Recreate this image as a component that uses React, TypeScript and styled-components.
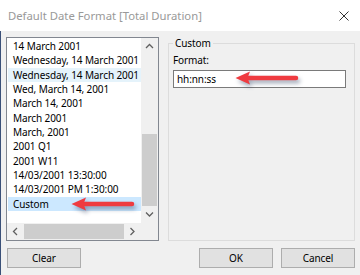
import styled, { createGlobalStyle } from "styled-components";

const GlobalStyle = createGlobalStyle`
  html, body {
    margin: 0;
    padding: 0;
    background: #f0f0f0;
  }
  body {
    font-family: "Noto Sans", "Open Sans", sans-serif;
    color: #000;
  }
`;

const Window = styled.div`
  position: relative;
  width: 360px;
  height: 275px;
  display: flex;
  flex-direction: column;
  overflow: hidden;
`;

const TitleBar = styled.div`
  height: 31px;
  flex: none;
  background: #fff;
  display: flex;
  align-items: center;
  justify-content: space-between;
  padding: 0 11px 0 8px;
`;

const Title = styled.span`
  font-size: 11.3px;
  color: #999;
`;

const Body = styled.div`
  flex: 1;
  display: flex;
  flex-direction: column;
  background: #f0f0f0;
  border-left: 1px solid #3a5078;
  padding: 6px 5px 7px 5px;
  font-size: 10px;
  letter-spacing: -0.1px;
`;

const MainRow = styled.div`
  display: flex;
  gap: 9px;
  height: 204px;
`;

const ListBox = styled.div`
  width: 153px;
  flex: none;
  box-sizing: border-box;
  border: 1px solid #828790;
  background: #fff;
  display: grid;
  grid-template-columns: 1fr 17px;
  grid-template-rows: 1fr 17px;
`;

const Items = styled.div`
  padding: 1px 0 0 1px;
  overflow: hidden;
`;

const Item = styled.div<{ $state?: "hover" | "selected" }>`
  height: 14.33px;
  line-height: 14.33px;
  padding-left: 5px;
  white-space: nowrap;
  background: ${(p) =>
    p.$state === "selected" ? "#cce8ff" : p.$state === "hover" ? "#e5f3fb" : "transparent"};
`;

const VScroll = styled.div`
  background: #f0f0f0;
  display: flex;
  flex-direction: column;
`;

const HScroll = styled.div`
  background: #f0f0f0;
  display: flex;
`;

const Corner = styled.div`
  background: #f0f0f0;
`;

const ScrollButton = styled.div`
  width: 17px;
  height: 17px;
  flex: none;
  display: flex;
  align-items: center;
  justify-content: center;
`;

const VTrack = styled.div`
  flex: 1;
  display: flex;
  flex-direction: column;
  justify-content: flex-end;
`;

const VThumb = styled.div`
  height: 72px;
  margin: 0 1px;
  background: #cdcdcd;
`;

const HTrack = styled.div`
  flex: 1;
  display: flex;
  padding: 1px 0;
`;

const HThumb = styled.div`
  flex: 1;
  background: #cdcdcd;
`;

const GroupBox = styled.fieldset`
  flex: 1;
  min-width: 0;
  margin: 0;
  border: 1px solid #dcdcdc;
  padding: 0 8px 0 4px;
`;

const Legend = styled.legend`
  padding: 0 2px;
  line-height: 13px;
`;

const Label = styled.div`
  margin-top: 4px;
  line-height: 13px;
`;

const Input = styled.div`
  margin-top: 3px;
  height: 18px;
  box-sizing: border-box;
  border: 1px solid #7a7a7a;
  background: #fff;
  padding: 0 3px;
  line-height: 16px;
`;

const Footer = styled.div`
  margin-top: 7px;
  display: flex;
  gap: 7px;
`;

const Button = styled.div<{ $push?: boolean }>`
  width: 74px;
  height: 20px;
  box-sizing: border-box;
  border: 1px solid #adadad;
  background: #e1e1e1;
  display: flex;
  align-items: center;
  justify-content: center;
  margin-left: ${(p) => (p.$push ? "auto" : "1px")};
`;

const Arrow = styled.svg<{ $left: number; $top: number }>`
  position: absolute;
  left: ${(p) => p.$left}px;
  top: ${(p) => p.$top}px;
  filter: drop-shadow(2px 3px 2px rgba(40, 60, 95, 0.45));
`;

const Chevron = ({ dir }: { dir: "up" | "down" | "left" | "right" }) => {
  const pts = {
    up: "1,5 4.5,1.5 8,5",
    down: "1,1.5 4.5,5 8,1.5",
    left: "5,1 1.5,4.5 5,8",
    right: "1.5,1 5,4.5 1.5,8",
  }[dir];
  const horiz = dir === "up" || dir === "down";
  return (
    <svg width={horiz ? 9 : 7} height={horiz ? 7 : 9} viewBox={horiz ? "0 0 9 7" : "0 0 7 9"}>
      <polyline points={pts} fill="none" stroke="#606060" strokeWidth="1.3" />
    </svg>
  );
};

const RedArrow = ({ left, top }: { left: number; top: number }) => (
  <Arrow $left={left} $top={top} width="66" height="16" viewBox="0 0 66 16">
    <line x1="12" y1="8" x2="62" y2="8" stroke="#ef3b40" strokeWidth="4.5" strokeLinecap="round" />
    <path d="M1.5 8 L16 1.5 L13.5 8 L16 14.5 Z" fill="#ef3b40" />
  </Arrow>
);

const formats = [
  "14 March 2001",
  "Wednesday, 14 March 2001",
  "Wednesday, 14 March 2001",
  "Wed, March 14, 2001",
  "March 14, 2001",
  "March 2001",
  "March, 2001",
  "2001 Q1",
  "2001 W11",
  "14/03/2001 13:30:00",
  "14/03/2001 PM 1:30:00",
  "Custom",
];

export default function App() {
  return (
    <>
      <GlobalStyle />
      <Window>
        <TitleBar>
          <Title>Default Date Format [Total Duration]</Title>
          <svg width="10" height="10" viewBox="0 0 10 10">
            <path d="M0.5 0.5 L9.5 9.5 M9.5 0.5 L0.5 9.5" stroke="#333" strokeWidth="1" />
          </svg>
        </TitleBar>
        <Body>
          <MainRow>
            <ListBox>
              <Items>
                {formats.map((f, i) => (
                  <Item key={i} $state={i === 2 ? "hover" : i === 11 ? "selected" : undefined}>
                    {f}
                  </Item>
                ))}
              </Items>
              <VScroll>
                <ScrollButton>
                  <Chevron dir="up" />
                </ScrollButton>
                <VTrack>
                  <VThumb />
                </VTrack>
                <ScrollButton>
                  <Chevron dir="down" />
                </ScrollButton>
              </VScroll>
              <HScroll>
                <ScrollButton>
                  <Chevron dir="left" />
                </ScrollButton>
                <HTrack>
                  <HThumb />
                </HTrack>
                <ScrollButton>
                  <Chevron dir="right" />
                </ScrollButton>
              </HScroll>
              <Corner />
            </ListBox>
            <GroupBox>
              <Legend>Custom</Legend>
              <Label>Format:</Label>
              <Input>hh:nn:ss</Input>
            </GroupBox>
          </MainRow>
          <Footer>
            <Button>Clear</Button>
            <Button $push>OK</Button>
            <Button>Cancel</Button>
          </Footer>
        </Body>
        <RedArrow left={70} top={196} />
        <RedArrow left={234} top={70} />
      </Window>
    </>
  );
}
